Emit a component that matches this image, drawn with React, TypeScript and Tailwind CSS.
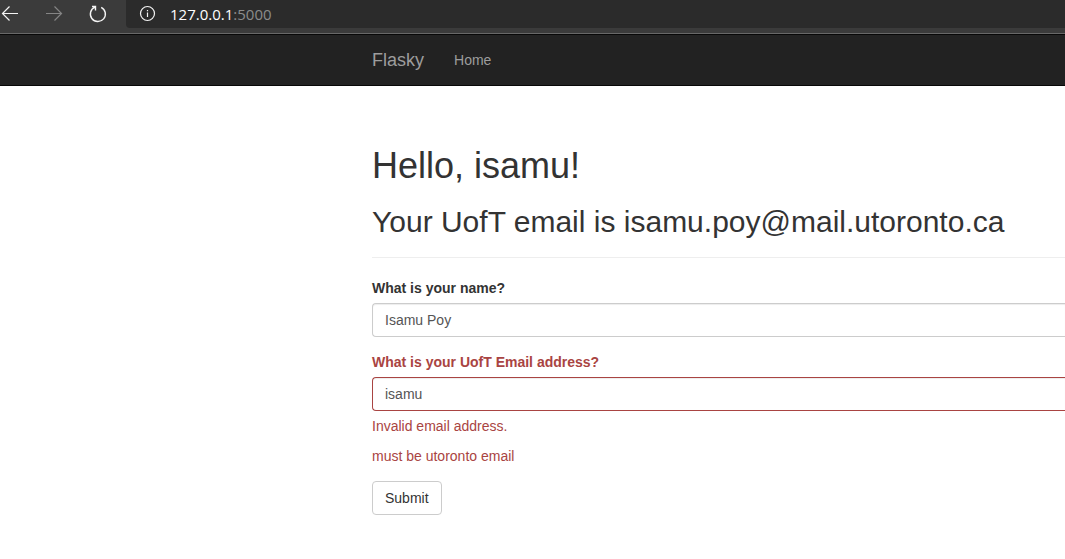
import type { ReactNode } from "react";

function ToolbarButton({ label, className, children }: { label: string; className: string; children: ReactNode }) {
  return (
    <button type="button" aria-label={label} className={`shrink-0 ${className}`}>
      <svg width="20" height="20" viewBox="0 0 20 20" fill="none" stroke="currentColor" strokeWidth="1.2" aria-hidden="true">
        {children}
      </svg>
    </button>
  );
}

function BrowserBar() {
  return (
    <div className="flex h-[34px] items-start border-b border-[#686868] bg-[#3b3b3b]">
      <div className="flex w-[126px] shrink-0 items-center pt-1">
        <ToolbarButton label="Back" className="text-[#f4f4f4]">
          <path d="M18 9.5H2.5M9.5 2.5l-7 7 7 7" />
        </ToolbarButton>
        <ToolbarButton label="Forward" className="ml-6 text-[#858585]">
          <path d="M2 9.5h15.500M10.500 2.500l7 7-7 7" />
        </ToolbarButton>
        <ToolbarButton label="Reload" className="ml-6 text-[#f4f4f4]">
          <path d="M13.200 3.300A7.500 7.500 0 1 1 7 3.100M4 2.500h3.500v4" strokeWidth="1.4" />
        </ToolbarButton>
      </div>
      <div className="flex h-7 min-w-0 flex-1 items-center rounded-bl-sm bg-[#2b2b2b] pl-3">
        <ToolbarButton label="Site information" className="text-[#f4f4f4]">
          <circle cx="9.500" cy="9.500" r="7" />
          <path d="M9.500 8.500v4.500M9.500 6v1.200" />
        </ToolbarButton>
        <span className="ml-3 font-['Open_Sans',sans-serif] text-[15px] leading-5 text-[#8c8c8c]">
          <span className="text-white">127.0.0.1</span>:5000
        </span>
      </div>
    </div>
  );
}

function Navbar() {
  return (
    <nav className="flex h-[52px] items-center border-y border-[#080808] bg-[#222222] pl-[372px] text-[#9d9d9d]">
      <a href="/" className="mr-[30px] text-lg leading-5">Flasky</a>
      <a href="/" className="text-sm leading-5">Home</a>
    </nav>
  );
}

const inputClass =
  "mt-[5px] block h-[34px] w-full rounded-l border border-r-0 bg-white px-3 text-sm text-[#555555] shadow-[inset_0_1px_1px_rgba(0,0,0,0.075)] outline-none";

export default function App() {
  return (
    <div className="min-h-screen overflow-x-hidden bg-white font-['Liberation_Sans',Arial,sans-serif] text-sm leading-5 text-[#333333]">
      <BrowserBar />
      <Navbar />
      <main className="pt-[60px] pb-5 pl-[372px]">
        <header className="border-b border-[#eeeeee] pb-5">
          <h1 className="text-4xl leading-10">Hello, isamu!</h1>
          <h2 className="mt-5 text-3xl leading-[31px]">Your UofT email is isamu.poy@mail.utoronto.ca</h2>
        </header>
        <form className="mt-5" noValidate onSubmit={(event) => event.preventDefault()}>
          <div>
            <label htmlFor="name" className="block font-bold">What is your name?</label>
            <input id="name" name="name" type="text" defaultValue="Isamu Poy" className={`${inputClass} border-[#cccccc]`} />
          </div>
          <div className="mt-[15px] text-[#a94442]">
            <label htmlFor="email" className="block font-bold">What is your UofT Email address?</label>
            <input
              id="email"
              name="email"
              type="text"
              defaultValue="isamu"
              aria-invalid="true"
              aria-describedby="email-format email-domain"
              className={`${inputClass} border-[#a94442]`}
            />
            <p id="email-format" className="mt-[5px]">Invalid email address.</p>
            <p id="email-domain" className="mt-2.5">must be utoronto email</p>
          </div>
          <button type="submit" className="mt-[15px] h-[34px] rounded border border-[#cccccc] bg-white px-3">
            Submit
          </button>
        </form>
      </main>
    </div>
  );
}
